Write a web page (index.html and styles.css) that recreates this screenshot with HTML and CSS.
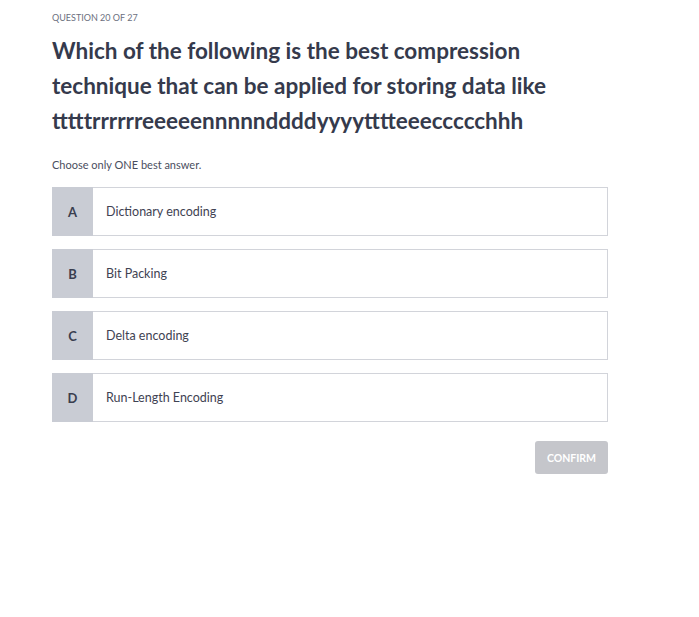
FILE: index.html
```html
<!DOCTYPE html>
<html>
<head>
<meta charset="utf-8">
<link rel="stylesheet" href="styles.css">
</head>
<body>
<main class="quiz">
  <div class="counter">QUESTION 20 OF 27</div>
  <h1 class="question">Which of the following is the best compression technique that can be applied for storing data like tttttrrrrrreeeeennnnnddddyyyytttteeeccccchhh</h1>
  <p class="hint">Choose only ONE best answer.</p>
  <div class="options">
    <div class="option"><div class="letter">A</div><div class="text">Dictionary encoding</div></div>
    <div class="option"><div class="letter">B</div><div class="text">Bit Packing</div></div>
    <div class="option"><div class="letter">C</div><div class="text">Delta encoding</div></div>
    <div class="option"><div class="letter">D</div><div class="text">Run-Length Encoding</div></div>
  </div>
  <div class="actions"><button class="confirm">CONFIRM</button></div>
</main>
</body>
</html>
```
FILE: styles.css
```css
html, body { margin: 0; padding: 0; background: #ffffff; }
body { font-family: "Lato", "Noto Sans", sans-serif; color: #3a3e4f; }
.quiz { width: 556px; padding: 12px 0 0 52px; }
.counter { font-size: 9px; color: #6c7080; letter-spacing: 0; line-height: 12px; }
.question { margin: 9px 0 0; font-size: 22.5px; font-weight: 700; line-height: 35px; color: #353a4c; }
.hint { margin: 20px 0 0; font-size: 11px; color: #4a4e5e; line-height: 14px; }
.options { margin-top: 15px; display: flex; flex-direction: column; gap: 13px; }
.option { display: flex; height: 47px; border: 1px solid #d2d4da; border-left: none; }
.letter { width: 41px; background: #c9ccd4; display: flex; align-items: center; justify-content: center; font-size: 13px; font-weight: 700; color: #3a3e4f; margin: -1px 0; }
.text { display: flex; align-items: center; padding-left: 13px; font-size: 12.5px; color: #3f4353; }
.actions { display: flex; justify-content: flex-end; margin-top: 19px; }
.confirm { width: 73px; height: 33px; border: none; border-radius: 3px; background: #c5c6cb; color: #ffffff; font-family: "Lato", sans-serif; font-weight: 700; font-size: 10.5px; padding: 0; }
```
